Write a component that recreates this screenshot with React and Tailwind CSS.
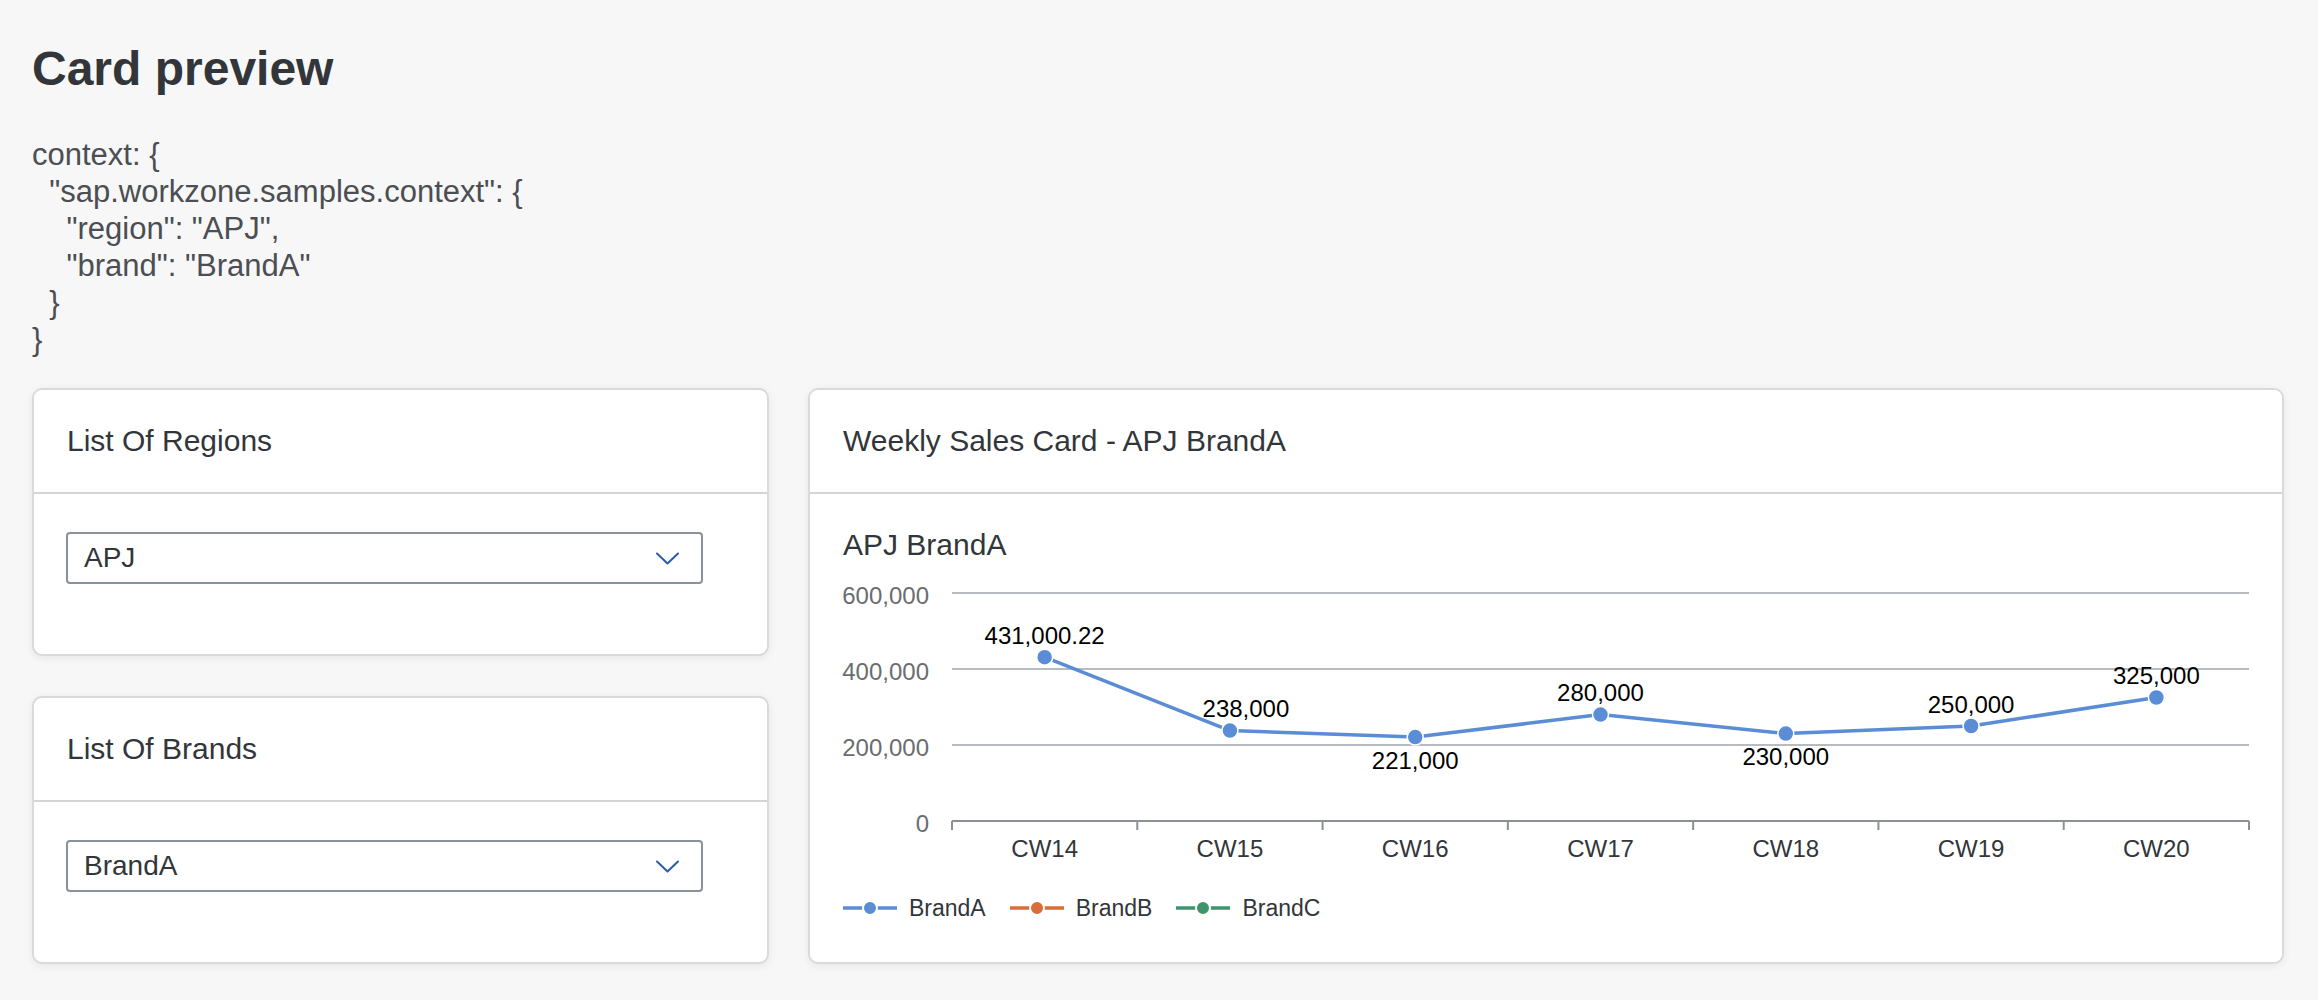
import React from 'react'

const WEEKS = ['CW14', 'CW15', 'CW16', 'CW17', 'CW18', 'CW19', 'CW20']
const POINTS = [
  { v: 431000.22, label: '431,000.22', pos: 'above', dx: 0 },
  { v: 238000, label: '238,000', pos: 'above', dx: 16 },
  { v: 221000, label: '221,000', pos: 'below', dx: 0 },
  { v: 280000, label: '280,000', pos: 'above', dx: 0 },
  { v: 230000, label: '230,000', pos: 'below', dx: 0 },
  { v: 250000, label: '250,000', pos: 'above', dx: 0 },
  { v: 325000, label: '325,000', pos: 'above', dx: 0 },
]

// plot geometry (svg units == px)
const X0 = 109
const PLOT_W = 1297
const STEP = PLOT_W / 7
const Y0 = 258
const Y_RANGE = 228
const cx = (i) => X0 + STEP * (i + 0.5)
const cy = (v) => Y0 - (v / 600000) * Y_RANGE

const BLUE = '#5a8dd6'

function Chevron() {
  return (
    <svg width="23" height="13" viewBox="0 0 23 13" fill="none">
      <path d="M1 1.5 L11.5 11.5 L22 1.5" stroke="#2c5ca8" strokeWidth="2" strokeLinecap="round" strokeLinejoin="round" />
    </svg>
  )
}

function Select({ value }) {
  return (
    <div className="flex items-center justify-between w-[637px] h-[52px] border-2 border-[#89919a] rounded-[4px] bg-white pl-[16px] pr-[22px]">
      <span className="text-[28px] leading-none text-[#32363a]">{value}</span>
      <Chevron />
    </div>
  )
}

function Card({ title, className = '', children }) {
  return (
    <div className={`bg-white border-2 border-[#dadada] rounded-[10px] shadow-[0_2px_8px_rgba(0,0,0,0.07)] flex flex-col ${className}`}>
      <div className="h-[104px] flex items-center px-[33px] border-b-2 border-[#d5d5d5] shrink-0">
        <h2 className="text-[30px] leading-[36px] text-[#32363a]">{title}</h2>
      </div>
      {children}
    </div>
  )
}

function LegendItem({ color, label }) {
  return (
    <div className="flex items-center gap-[12px]">
      <svg width="54" height="16" viewBox="0 0 54 16">
        <line x1="0" y1="8" x2="54" y2="8" stroke={color} strokeWidth="3.5" />
        <circle cx="27" cy="8" r="7" fill={color} stroke="#fff" strokeWidth="2" />
      </svg>
      <span className="text-[23px] leading-[30px] text-[#32363a]">{label}</span>
    </div>
  )
}

function LineChart() {
  const path = POINTS.map((p, i) => `${i === 0 ? 'M' : 'L'}${cx(i)} ${cy(p.v)}`).join(' ')
  const grid = [
    { v: 600000, t: '600,000' },
    { v: 400000, t: '400,000' },
    { v: 200000, t: '200,000' },
  ]
  return (
    <svg width="1406" height="312" viewBox="0 0 1406 312" className="overflow-visible block" style={{ fontFamily: '"Liberation Sans", Arial, sans-serif' }}>
      {grid.map(g => (
        <g key={g.t}>
          <line x1={X0} x2={X0 + PLOT_W} y1={cy(g.v)} y2={cy(g.v)} stroke="#b8bbbf" strokeWidth="2" />
          <text x="86" y={cy(g.v) + 2} textAnchor="end" dominantBaseline="central" fontSize="24" fill="#6a6d70">{g.t}</text>
        </g>
      ))}
      <text x="86" y={Y0 + 2} textAnchor="end" dominantBaseline="central" fontSize="24" fill="#6a6d70">0</text>
      <line x1={X0} x2={X0 + PLOT_W} y1={Y0} y2={Y0} stroke="#8d9196" strokeWidth="2" />
      {Array.from({ length: 8 }).map((_, i) => (
        <line key={i} x1={X0 + STEP * i} x2={X0 + STEP * i} y1={Y0} y2={Y0 + 9} stroke="#8d9196" strokeWidth="2" />
      ))}
      {WEEKS.map((w, i) => (
        <text key={w} x={cx(i)} y="285" textAnchor="middle" dominantBaseline="central" fontSize="24" fill="#32363a">{w}</text>
      ))}
      <path d={path} fill="none" stroke={BLUE} strokeWidth="3.5" strokeLinejoin="round" />
      {POINTS.map((p, i) => (
        <circle key={i} cx={cx(i)} cy={cy(p.v)} r="8" fill={BLUE} stroke="#fff" strokeWidth="1.5" />
      ))}
      {POINTS.map((p, i) => (
        <text
          key={p.label}
          x={cx(i) + p.dx}
          y={p.pos === 'above' ? cy(p.v) - 22 : cy(p.v) + 23}
          textAnchor="middle"
          dominantBaseline="central"
          fontSize="24"
          fill="#000"
        >
          {p.label}
        </text>
      ))}
    </svg>
  )
}

const CONTEXT = `context: {
  "sap.workzone.samples.context": {
    "region": "APJ",
    "brand": "BrandA"
  }
}`

export default function App() {
  return (
    <div className="min-h-screen bg-[#f7f7f7] font-['Liberation_Sans',Arial,sans-serif] pl-[32px] pt-[45px] pb-[40px]">
      <h1 className="text-[48px] leading-none font-bold text-[#32363a]">Card preview</h1>

      <pre className="mt-[43px] font-['Liberation_Sans',Arial,sans-serif] text-[31px] leading-[37px] text-[#4b4e52] whitespace-pre">
        {CONTEXT}
      </pre>

      <div className="mt-[30px] flex gap-[39px] items-stretch">
        {/* left column: filter cards */}
        <div className="w-[737px] flex flex-col gap-[40px]">
          <Card title="List Of Regions">
            <div className="px-[32px] pt-[38px] pb-[70px]">
              <Select value="APJ" />
            </div>
          </Card>
          <Card title="List Of Brands">
            <div className="px-[32px] pt-[38px] pb-[70px]">
              <Select value="BrandA" />
            </div>
          </Card>
        </div>

        {/* weekly sales */}
        <Card title="Weekly Sales Card - APJ BrandA" className="w-[1476px]">
          <div className="px-[33px] pt-[33px] pb-[39px]">
            <h3 className="text-[30px] leading-[36px] text-[#32363a]">APJ BrandA</h3>
            <LineChart />
            <div className="mt-[18px] flex items-center gap-[24px]">
              <LegendItem color={BLUE} label="BrandA" />
              <LegendItem color="#d96e3a" label="BrandB" />
              <LegendItem color="#3f946b" label="BrandC" />
            </div>
          </div>
        </Card>
      </div>
    </div>
  )
}
